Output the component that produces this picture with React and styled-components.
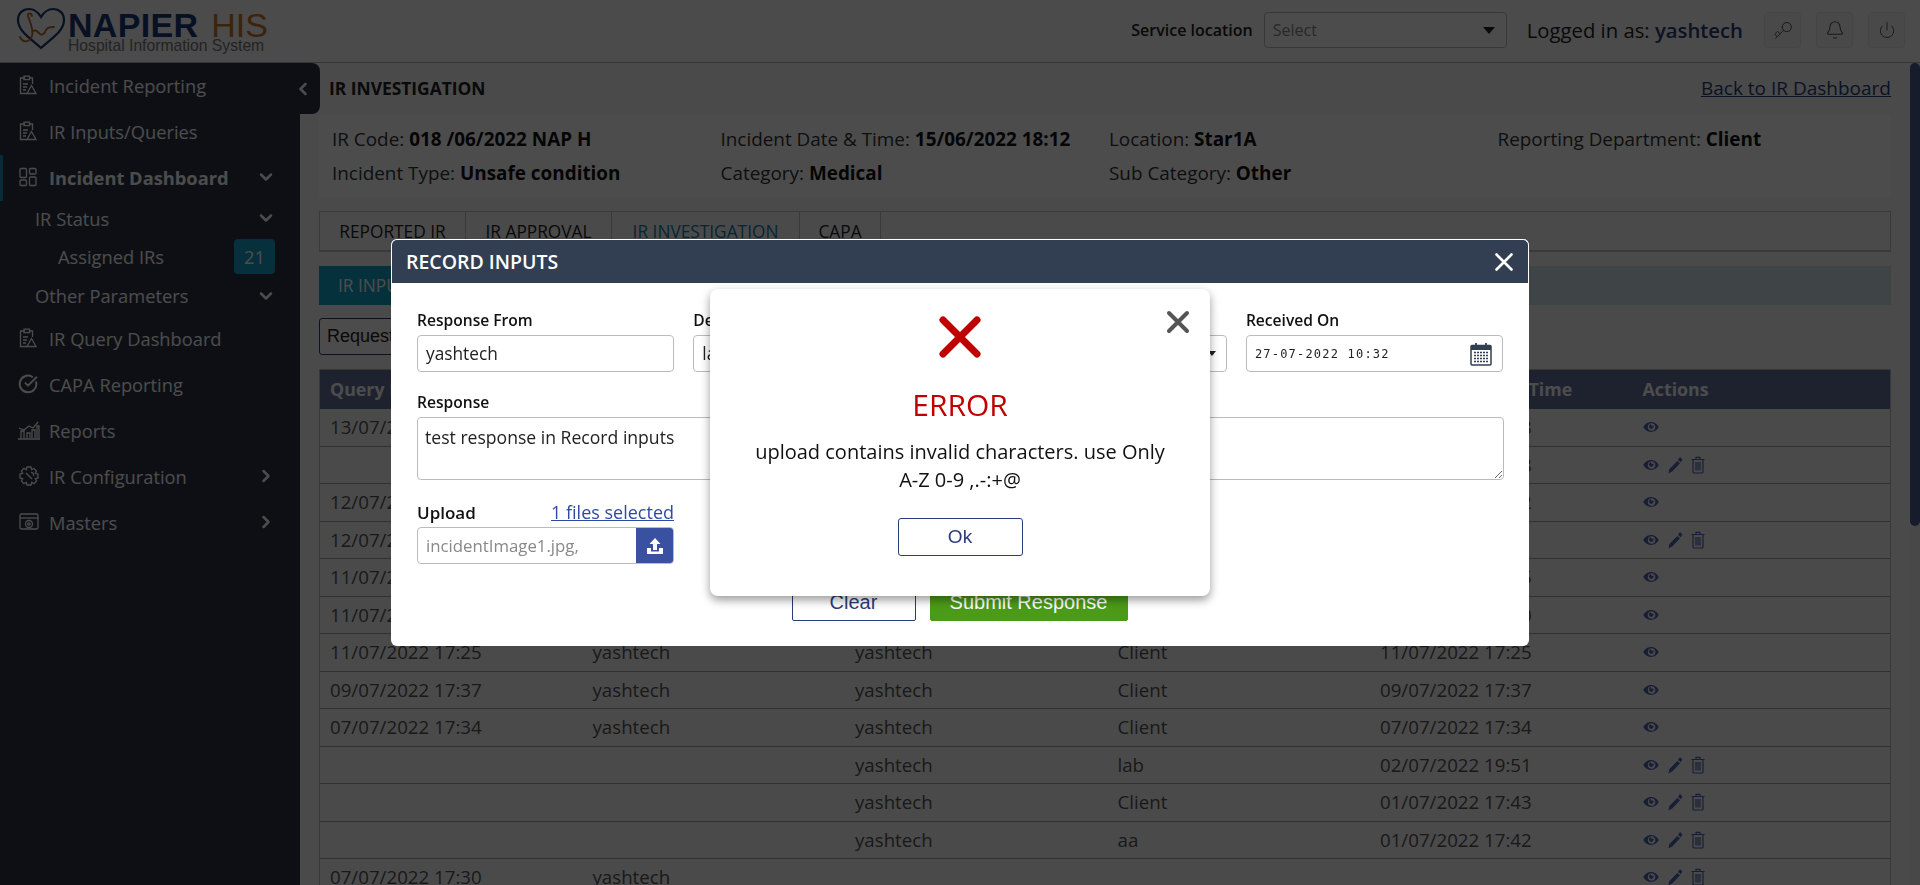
import React from 'react';
import styled, { createGlobalStyle } from 'styled-components';
import { ChevronDown, ChevronRight, ChevronLeft, Key, Bell, Power, CircleCheckBig } from 'lucide-react';

const Global = createGlobalStyle`
  html, body { margin: 0; padding: 0; height: 100%; overflow: hidden; }
  body { font-family: "Open Sans", "Noto Sans", sans-serif; font-size: 16px; color: #222; background: #f9f9f9; }
  * { box-sizing: border-box; }
`;

const Page = styled.div`height: 885px; display: flex; flex-direction: column; overflow: hidden;`;
const Header = styled.header`height: 63px; flex: none; display: flex; align-items: center; padding: 0 15px 2px 16px; background: #fbfbfb; border-bottom: 1px solid #b5b5b5;`;
const Logo = styled.div`display: flex; align-items: flex-start; gap: 2px; flex: none;`;
const LogoText = styled.div`display: flex; flex-direction: column; font-family: "Liberation Sans", Arial, sans-serif; width: 200px;`;
const LogoMain = styled.div`display: flex; gap: 13px; font-size: 34px; line-height: 31px; height: 30px; padding-top: 3px; white-space: nowrap;`;
const LogoName = styled.span`font-weight: 700; color: #1d3a78; letter-spacing: .3px;`;
const LogoHis = styled.span`color: #c9772a;`;
const LogoSub = styled.div`font-size: 15.7px; line-height: 17px; color: #777; white-space: nowrap;`;
const HeaderRight = styled.div`margin-left: auto; display: flex; align-items: center;`;
const ServiceLabel = styled.span`font-size: 16px; font-weight: 600; color: #222; margin-right: 11px; white-space: nowrap;`;
const HeaderSelect = styled.div`width: 243px; height: 36px; border: 1px solid #bbb; border-radius: 4px; display: flex; align-items: center; justify-content: space-between; padding: 0 11px 0 8px; font-size: 16px; color: #888; background: #fff;`;
const Caret = styled.i`display: block; width: 0; height: 0; border-left: ${p => p.$s || 6}px solid transparent; border-right: ${p => p.$s || 6}px solid transparent; border-top: ${p => (p.$s || 6) + 1}px solid #222;`;
const LoggedIn = styled.span`font-size: 20.3px; color: #222; margin: 0 21px 0 20px; white-space: nowrap;`;
const UserName = styled.span`font-weight: 600; color: #2b3d78;`;
const IconBtn = styled.div`width: 37px; height: 36px; margin-left: ${p => p.$first ? 0 : 15}px; background: #f5f5f5; border: 1px solid #e8e8e8; border-radius: 4px; display: flex; align-items: center; justify-content: center; color: #555;`;

const Body = styled.div`flex: 1; display: flex; min-height: 0; position: relative;`;
const Sidebar = styled.nav`width: 300px; flex: none; background: #2e3447; color: #fff;`;
const CollapseTab = styled.div`position: absolute; left: 280px; top: 0; width: 40px; height: 51px; background: #2e3447; border-radius: 0 8px 8px 0; display: flex; align-items: center; justify-content: flex-end; padding-right: 7px; color: #fff;`;
const NavItem = styled.div`height: ${p => p.$h || 46}px; display: flex; align-items: center; padding: 0 24px 2px ${p => p.$indent || 19}px; gap: 12px; font-size: 18.3px; font-weight: ${p => p.$bold ? 700 : 400}; border-left: ${p => p.$active ? '3px solid #1593b4' : 'none'}; color: #fff; ${p => p.$active ? 'padding-left: 16px;' : ''}`;
const NavLabel = styled.span`flex: 1; white-space: nowrap;`;
const Badge = styled.span`width: 41px; height: 35px; margin-right: 1px; background: #17a0c7; border-radius: 4px; display: flex; align-items: center; justify-content: center;`;
const NavIcon = styled.svg`width: 18px; height: 20px; flex: none; fill: none; stroke: currentColor; stroke-width: 1.3;`;

const Main = styled.main`flex: 1; min-width: 0; padding: 0 19px; overflow: hidden;`;
const TitleRow = styled.div`height: 51px; display: flex; align-items: center; justify-content: space-between; padding: 0 0 2px 10px;`;
const Title = styled.h1`margin: 0; font-size: 17.4px; font-weight: 700; color: #222;`;
const BackLink = styled.a`font-size: 19px; color: #2b3d78; text-decoration: underline;`;
const InfoPanel = styled.div`height: 84px; background: #fff; padding: 8px 0 0 13px; display: grid; grid-template-columns: repeat(4, 388.5px); grid-auto-rows: 34px; align-items: center; font-size: 18.9px; color: #333;`;
const InfoValue = styled.b`font-weight: 700; color: #111;`;
const Tabs = styled.div`margin-top: 13px; height: 41px; display: flex; border: 1px solid #c4c4c4; border-bottom-width: 2px;`;
const TabItem = styled.div`width: ${p => p.$w}px; display: flex; align-items: center; justify-content: center; border-right: 1px solid #c4c4c4; font-size: 17.3px; color: ${p => p.$on ? '#1580a8' : '#222'}; white-space: nowrap;`;
const SubStrip = styled.div`margin-top: 14px; height: 39px; background: #d3e6ed;`;
const SubTab = styled.div`width: 130px; height: 100%; background: #10a5c9; color: #fff; display: flex; align-items: center; padding-left: 19px; font-size: 17.3px; white-space: nowrap;`;
const FilterBox = styled.div`margin-top: 13px; width: 200px; height: 37px; border: 1px solid #2b3d78; border-radius: 3px; display: flex; align-items: center; padding-left: 7px; font-family: "Liberation Sans", Arial, sans-serif; font-size: 18px; color: #222; background: #fff;`;
const Table = styled.div`margin-top: 14px; border: 1px solid #bdbdbd; border-bottom: none;`;
const HeadRow = styled.div`display: grid; grid-template-columns: repeat(6, 262.5px); height: 39px; align-items: center; background: #64729d; color: #fff; font-size: 17.8px; font-weight: 700; white-space: nowrap;`;
const Row = styled.div`display: grid; grid-template-columns: repeat(6, 262.5px); height: 37.5px; align-items: center; border-bottom: 1px solid #a6a6a6; font-size: 18.7px; color: #555;`;
const Cell = styled.div`padding: 0 0 1px 10px; white-space: nowrap;`;
const Actions = styled.div`padding-left: 10px; display: flex; align-items: center; gap: 8px; color: #4f66b5;`;
const ScrollTrack = styled.div`width: 10px; flex: none; background: #f0f0f0;`;
const ScrollThumb = styled.div`height: 463px; background: #4a5e93; border-radius: 5px;`;

const Overlay = styled.div`position: fixed; inset: 0; background: rgba(0,0,0,.7); display: flex; justify-content: center; padding-top: 239px;`;
const Modal = styled.div`width: 1138px; height: 407px; background: #fff; border-radius: 6px; overflow: hidden; display: flex; flex-direction: column;`;
const ModalHead = styled.div`height: 44px; flex: none; background: #323e51; border: 1px solid #fff; border-bottom: none; border-radius: 6px 6px 0 0; color: #fff; font-size: 19.5px; font-weight: 600; display: flex; align-items: center; justify-content: space-between; padding: 0 14px;`;
const ModalBody = styled.div`padding: 26px 25px 0 26px; display: flex; flex-direction: column; flex: 1;`;
const FieldGrid = styled.div`display: grid; grid-template-columns: repeat(4, 257px); column-gap: 19.3px;`;
const Field = styled.div`display: flex; flex-direction: column; min-width: 0;`;
const FieldLabel = styled.label`font-size: 15.6px; line-height: 22px; height: 26px; font-weight: 600; color: #111; white-space: nowrap;`;
const InputBox = styled.div`height: 37px; border: 1px solid #bbb; border-radius: 4px; display: flex; align-items: center; justify-content: space-between; padding: 0 10px 0 8px; font-size: 17.3px; color: #222;`;
const DateText = styled.span`font-family: "DejaVu Sans Mono", monospace; font-size: 12px; letter-spacing: 1.2px; white-space: pre;`;
const ResponseField = styled.div`margin-top: 19px; display: flex; flex-direction: column;`;
const TextArea = styled.textarea`height: 63px; width: 100%; border: 1px solid #bbb; border-radius: 4px; padding: 7px 7px; font-family: "Open Sans", sans-serif; font-size: 17.6px; color: #222; resize: both; outline: none;`;
const UploadWrap = styled.div`margin-top: 20px; width: 257px;`;
const UploadHead = styled.div`display: flex; justify-content: space-between; align-items: center; height: 24px;`;
const UploadLabel = styled.span`font-size: 17px; font-weight: 600; color: #111;`;
const FilesLink = styled.a`font-size: 18px; font-weight: 500; color: #2f4aa0; text-decoration: underline; white-space: nowrap;`;
const UploadBox = styled.div`height: 37px; margin-top: 3px; border: 1px solid #bbb; border-radius: 4px; display: flex; overflow: hidden;`;
const UploadName = styled.span`flex: 1; display: flex; align-items: center; padding-left: 8px; font-size: 16.8px; color: #888;`;
const UploadBtn = styled.div`width: 37px; background: #3a50a0; display: flex; align-items: center; justify-content: center;`;
const ModalActions = styled.div`margin-top: 20px; display: flex; justify-content: center; gap: 14px; padding-right: 2px;`;
const ActionBtn = styled.button`height: 37px; width: ${p => p.$w}px; border: 1px solid ${p => p.$fill ? '#4c9b18' : '#2b3d78'}; background: ${p => p.$fill ? '#4c9b18' : '#fff'}; color: ${p => p.$fill ? '#fff' : '#2b3d78'}; font-family: "Liberation Sans", Arial, sans-serif; font-size: 20px; border-radius: 2px; padding: 0;`;

const ErrorLayer = styled.div`position: fixed; inset: 0; display: flex; justify-content: center; padding-top: 289px; pointer-events: none;`;
const ErrorBox = styled.div`position: relative; width: 500px; height: 307px; background: #fff; border-radius: 8px; box-shadow: 0 4px 10px rgba(0,0,0,.4); display: flex; flex-direction: column; align-items: center; padding-top: 26px;`;
const ErrorClose = styled.svg`position: absolute; right: 20px; top: 21px; width: 24px; height: 24px;`;
const ErrorTitle = styled.div`margin-top: 27px; font-size: 30px; line-height: 38px; color: #c00000;`;
const ErrorText = styled.div`margin-top: 14px; width: 415px; font-size: 20px; line-height: 28px; color: #111; text-align: center;`;
const OkBtn = styled.button`margin-top: 24px; width: 125px; height: 38px; background: #fff; border: 1px solid #2b3d78; border-radius: 3px; color: #2b3d78; font-family: "Liberation Sans", Arial, sans-serif; font-size: 19px; padding: 0;`;

const ClipIcon = () => (
  <NavIcon viewBox="0 0 18 20">
    <path d="M11 3h2.5v6M6 3H1.500v15.500H8" />
    <rect x="5" y="1.200" width="5.500" height="3.400" />
    <path d="M4 9h5M4 12h4M4 15h3" />
    <path d="M12.500 10.500l4.500 8h-9z" />
  </NavIcon>
);
const GridIcon = () => (
  <NavIcon viewBox="0 0 18 20">
    <rect x="1" y="1.500" width="6.500" height="9" rx="1" /><rect x="10.500" y="1.500" width="6.500" height="5.500" rx="1" />
    <rect x="1" y="13" width="6.500" height="5.500" rx="1" /><rect x="10.500" y="10" width="6.500" height="8.500" rx="1" />
  </NavIcon>
);
const ChartIcon = () => (
  <NavIcon viewBox="0 0 22 20" style={{ width: 22, marginRight: -3, marginLeft: -1 }}>
    <path d="M0 19h22M3 18v-7h3v7M9 18v-5h3v5M14 18v-8h3v8M19 18V6h2v12" />
    <path d="M1 8l5 2 5-4 4 2 5-6" />
  </NavIcon>
);
const GearIcon = () => (
  <NavIcon viewBox="0 0 20 20" style={{ width: 20, marginRight: -2 }}>
    <path d="M8 1h4l.6 2.500 2.300-1 2.600 2.600-1.200 2.200L19 8v4l-2.600.7 1.200 2.300-2.600 2.600-2.300-1.200L12 19H8l-.7-2.600-2.300 1.200L2.400 15l1.200-2.300L1 12V8l2.600-.7L2.400 5 5 2.400l2.300 1.200z" />
    <path d="M7 7l6 6M12 6.500a2.500 2.500 0 0 1 2.500 3.500" />
  </NavIcon>
);
const BrowserGear = () => (
  <NavIcon viewBox="0 0 20 20" style={{ width: 20, marginRight: -2 }}>
    <rect x="1" y="2" width="18" height="15" rx="1.500" /><path d="M1 6h18" />
    <circle cx="10" cy="12" r="3.500" /><circle cx="10" cy="12" r="1.200" />
  </NavIcon>
);
const EyeIcon = () => (
  <svg width="16" height="14" viewBox="0 0 16 14"><path fillRule="evenodd" fill="currentColor" d="M8 2C4.500 2 1.600 4.300.3 7 1.600 9.800 4.500 12 8 12s6.400-2.200 7.700-5C14.400 4.300 11.500 2 8 2zm0 1.300a3.800 3.800 0 1 1 0 7.500 3.800 3.800 0 0 1 0-7.500zM6.300 5.300A2.300 2.300 0 1 0 10 5a1.100 1.100 0 1 1-1.600-1.300 2.400 2.400 0 0 0-2.100 1.600z" /></svg>
);
const PencilIcon = () => (
  <svg width="16" height="18" viewBox="0 0 16 18"><path fill="currentColor" d="M13 1l2.500 2.500-1.700 2.700L11 4zM10.300 5l2.700 2.200-7.500 8L1.500 17.500l.7-4.200z" /></svg>
);
const TrashIcon = () => (
  <svg width="14" height="18" viewBox="0 0 14 18" fill="none" stroke="currentColor" strokeWidth="1.200"><path d="M.5 3.500h13M5 3.500V1.300h4v2.200M2 3.500v12.500a1 1 0 0 0 1 1h8a1 1 0 0 0 1-1V3.500M5 6v8.500M7 6v8.500M9 6v8.500" /></svg>
);

const rows = [
  ['13/07/2022 18:28', 'yashtech', 'yashtech', 'Client', '13/07/2022 18:28', 0],
  ['', '', 'yashtech', 'lab', '13/07/2022 18:18', 1],
  ['12/07/2022 17:42', 'yashtech', 'yashtech', 'Client', '12/07/2022 17:42', 0],
  ['12/07/2022 17:31', 'yashtech', 'yashtech', 'Client', '12/07/2022 17:31', 1],
  ['11/07/2022 17:35', 'yashtech', 'yashtech', 'Client', '11/07/2022 17:35', 0],
  ['11/07/2022 17:30', 'yashtech', 'yashtech', 'Client', '11/07/2022 17:30', 0],
  ['11/07/2022 17:25', 'yashtech', 'yashtech', 'Client', '11/07/2022 17:25', 0],
  ['09/07/2022 17:37', 'yashtech', 'yashtech', 'Client', '09/07/2022 17:37', 0],
  ['07/07/2022 17:34', 'yashtech', 'yashtech', 'Client', '07/07/2022 17:34', 0],
  ['', '', 'yashtech', 'lab', '02/07/2022 19:51', 1],
  ['', '', 'yashtech', 'Client', '01/07/2022 17:43', 1],
  ['', '', 'yashtech', 'aa', '01/07/2022 17:42', 1],
  ['07/07/2022 17:30', 'yashtech', '', '', '', 1],
];

export default function App() {
  return (
    <Page>
      <Global />
      <Header>
        <Logo>
          <svg width="50" height="44" viewBox="0 0 50 44" fill="none" strokeLinecap="round">
            <path d="M25 41C14 31 2 24 2 13 2 6 7 2 13 2c5 0 9 3 12 8 3-5 7-8 12-8 6 0 11 4 11 11 0 11-12 18-23 28z" stroke="#1d3a78" strokeWidth="2.200" />
            <path d="M4 30c3 6 9 6 12-1 2-6-2-14-4-20-1-3 3-4 4 0M16 25c3-3 5-1 7 1 2 3 5 2 7-3 2-3 4-3 8-3" stroke="#b5651d" strokeWidth="1.800" />
          </svg>
          <LogoText>
            <LogoMain><LogoName>NAPIER</LogoName><LogoHis>HIS</LogoHis></LogoMain>
            <LogoSub>Hospital Information System</LogoSub>
          </LogoText>
        </Logo>
        <HeaderRight>
          <ServiceLabel>Service location</ServiceLabel>
          <HeaderSelect>Select<Caret /></HeaderSelect>
          <LoggedIn>Logged in as: <UserName>yashtech</UserName></LoggedIn>
          <IconBtn $first><Key size={20} strokeWidth={1.2} style={{ transform: 'rotate(180deg)' }} /></IconBtn>
          <IconBtn><Bell size={20} strokeWidth={1.300} /></IconBtn>
          <IconBtn><Power size={18} strokeWidth={1.300} /></IconBtn>
        </HeaderRight>
      </Header>
      <Body>
        <Sidebar>
          <NavItem><ClipIcon /><NavLabel>Incident Reporting</NavLabel></NavItem>
          <NavItem><ClipIcon /><NavLabel>IR Inputs/Queries</NavLabel></NavItem>
          <NavItem $active $bold><GridIcon /><NavLabel>Incident Dashboard</NavLabel><ChevronDown size={20} strokeWidth={3} /></NavItem>
          <NavItem $h={36} $indent={35}><NavLabel>IR Status</NavLabel><ChevronDown size={20} strokeWidth={3} /></NavItem>
          <NavItem $h={40} $indent={58}><NavLabel>Assigned IRs</NavLabel><Badge>21</Badge></NavItem>
          <NavItem $h={39} $indent={35}><NavLabel>Other Parameters</NavLabel><ChevronDown size={20} strokeWidth={3} /></NavItem>
          <NavItem><ClipIcon /><NavLabel>IR Query Dashboard</NavLabel></NavItem>
          <NavItem><CircleCheckBig size={20} strokeWidth={2.400} style={{ margin: '0 -1px' }} /><NavLabel>CAPA Reporting</NavLabel></NavItem>
          <NavItem><ChartIcon /><NavLabel>Reports</NavLabel></NavItem>
          <NavItem><GearIcon /><NavLabel>IR Configuration</NavLabel><ChevronRight size={20} strokeWidth={3} /></NavItem>
          <NavItem><BrowserGear /><NavLabel>Masters</NavLabel><ChevronRight size={20} strokeWidth={3} /></NavItem>
        </Sidebar>
        <CollapseTab><ChevronLeft size={20} strokeWidth={3} /></CollapseTab>
        <Main>
          <TitleRow><Title>IR INVESTIGATION</Title><BackLink>Back to IR Dashboard</BackLink></TitleRow>
          <InfoPanel>
            <span>IR Code: <InfoValue>018 /06/2022 NAP H</InfoValue></span>
            <span>Incident Date &amp; Time: <InfoValue>15/06/2022 18:12</InfoValue></span>
            <span>Location: <InfoValue>Star1A</InfoValue></span>
            <span>Reporting Department: <InfoValue>Client</InfoValue></span>
            <span>Incident Type: <InfoValue>Unsafe condition</InfoValue></span>
            <span>Category: <InfoValue>Medical</InfoValue></span>
            <span>Sub Category: <InfoValue>Other</InfoValue></span>
          </InfoPanel>
          <Tabs>
            <TabItem $w={146}>REPORTED IR</TabItem>
            <TabItem $w={146}>IR APPROVAL</TabItem>
            <TabItem $w={188} $on>IR INVESTIGATION</TabItem>
            <TabItem $w={81}>CAPA</TabItem>
          </Tabs>
          <SubStrip><SubTab>IR INPUTS</SubTab></SubStrip>
          <FilterBox>Requests</FilterBox>
          <Table>
            <HeadRow>
              <Cell>Query Date</Cell><Cell>Requested By</Cell><Cell>Response From</Cell><Cell>Department</Cell><Cell>Received Date &amp; Time</Cell><Cell>Actions</Cell>
            </HeadRow>
            {rows.map((r, i) => (
              <Row key={i}>
                {r.slice(0, 5).map((c, j) => <Cell key={j}>{c}</Cell>)}
                <Actions><EyeIcon />{r[5] ? <><PencilIcon /><TrashIcon /></> : null}</Actions>
              </Row>
            ))}
          </Table>
        </Main>
        <ScrollTrack><ScrollThumb /></ScrollTrack>
      </Body>
      <Overlay>
        <Modal>
          <ModalHead>RECORD INPUTS
            <svg width="20" height="20" viewBox="0 0 20 20" stroke="#fff" strokeWidth="2.600" strokeLinecap="round"><path d="M2.500 2.500l15 15M17.500 2.500l-15 15" /></svg>
          </ModalHead>
          <ModalBody>
            <FieldGrid>
              <Field><FieldLabel>Response From</FieldLabel><InputBox>yashtech</InputBox></Field>
              <Field><FieldLabel>Department</FieldLabel><InputBox>lab</InputBox></Field>
              <Field><FieldLabel>Type</FieldLabel><InputBox><span>Select</span><Caret $s={4} /></InputBox></Field>
              <Field>
                <FieldLabel>Received On</FieldLabel>
                <InputBox>
                  <DateText>27-07-2022 10:32</DateText>
                  <svg width="22" height="24" viewBox="0 0 22 24">
                    <rect x="1" y="3.500" width="20" height="19.500" rx="1" fill="#fff" stroke="#323e51" strokeWidth="1.500" />
                    <rect x="1" y="3.500" width="20" height="4.500" fill="#323e51" />
                    <path d="M6 1v5M16 1v5" stroke="#323e51" strokeWidth="1.800" />
                    <path d="M4 10.500h14M4 13.500h14M4 16.500h14M4 19.500h14" stroke="#323e51" strokeWidth="1.700" strokeDasharray="2 1" />
                  </svg>
                </InputBox>
              </Field>
            </FieldGrid>
            <ResponseField>
              <FieldLabel>Response</FieldLabel>
              <TextArea readOnly defaultValue="test response in Record inputs" />
            </ResponseField>
            <UploadWrap>
              <UploadHead><UploadLabel>Upload</UploadLabel><FilesLink>1 files selected</FilesLink></UploadHead>
              <UploadBox>
                <UploadName>incidentImage1.jpg,</UploadName>
                <UploadBtn>
                  <svg width="18" height="18" viewBox="0 0 18 18" fill="#fff"><path d="M9 1l5.500 6H11v6H7V7H3.500z" /><path d="M1 11h4v3.500h8V11h4v6H1z" /></svg>
                </UploadBtn>
              </UploadBox>
            </UploadWrap>
            <ModalActions>
              <ActionBtn $w={124}>Clear</ActionBtn>
              <ActionBtn $w={198} $fill>Submit Response</ActionBtn>
            </ModalActions>
          </ModalBody>
        </Modal>
      </Overlay>
      <ErrorLayer>
        <ErrorBox>
          <ErrorClose viewBox="0 0 24 24" stroke="#555" strokeWidth="4" strokeLinecap="round"><path d="M3 3l18 18M21 3L3 21" /></ErrorClose>
          <svg width="44" height="44" viewBox="0 0 44 44" stroke="#c00000" strokeWidth="7" strokeLinecap="round"><path d="M5 5l34 34M39 5L5 39" /></svg>
          <ErrorTitle>ERROR</ErrorTitle>
          <ErrorText>upload contains invalid characters. use Only A-Z 0-9 ,.-:+@</ErrorText>
          <OkBtn>Ok</OkBtn>
        </ErrorBox>
      </ErrorLayer>
    </Page>
  );
}
